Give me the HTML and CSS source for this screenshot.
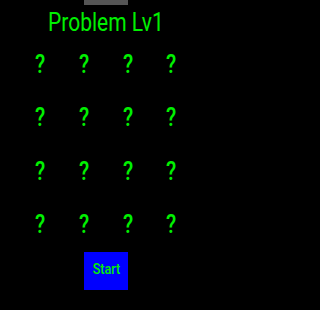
FILE: index.html
```html
<!DOCTYPE html>
<html>
<head>
<meta charset="utf-8">
<link rel="stylesheet" href="styles.css">
</head>
<body>
<div class="screen">
  <div class="handle"></div>
  <h1 class="title"><span class="squeeze">Problem Lv1</span></h1>
  <div class="grid">
    <div class="cell"><span class="squeeze">?</span></div>
    <div class="cell"><span class="squeeze">?</span></div>
    <div class="cell"><span class="squeeze">?</span></div>
    <div class="cell"><span class="squeeze">?</span></div>
    <div class="cell"><span class="squeeze">?</span></div>
    <div class="cell"><span class="squeeze">?</span></div>
    <div class="cell"><span class="squeeze">?</span></div>
    <div class="cell"><span class="squeeze">?</span></div>
    <div class="cell"><span class="squeeze">?</span></div>
    <div class="cell"><span class="squeeze">?</span></div>
    <div class="cell"><span class="squeeze">?</span></div>
    <div class="cell"><span class="squeeze">?</span></div>
    <div class="cell"><span class="squeeze">?</span></div>
    <div class="cell"><span class="squeeze">?</span></div>
    <div class="cell"><span class="squeeze">?</span></div>
    <div class="cell"><span class="squeeze">?</span></div>
  </div>
  <button class="start"><span class="squeeze">Start</span></button>
</div>
</body>
</html>
```
FILE: styles.css
```css
html, body {
  margin: 0;
  padding: 0;
  background: #000;
}
.screen {
  width: 207px;
  height: 310px;
  box-sizing: border-box;
  padding-left: 5px;
  display: flex;
  flex-direction: column;
  align-items: center;
  font-family: Roboto, "Liberation Sans", sans-serif;
  color: #00f000;
  overflow: hidden;
}
.handle {
  width: 44px;
  height: 5px;
  background: #555;
  flex: none;
}
.squeeze {
  display: inline-block;
  transform: scaleX(0.84);
}
.title {
  margin: 3px 0 0 0;
  font-size: 25px;
  font-weight: 400;
  line-height: 30px;
  white-space: nowrap;
}
.grid {
  display: grid;
  grid-template-columns: repeat(4, 43.67px);
  grid-auto-rows: 53.33px;
  font-size: 25px;
  font-weight: 500;
}
.cell {
  line-height: 53.33px;
  text-align: center;
}
.start {
  width: 44px;
  height: 38px;
  margin: 1px 0 0 0;
  padding: 0 0 4px 0;
  border: none;
  background: #0000ff;
  color: #00f000;
  font-family: Roboto, "Liberation Sans", sans-serif;
  font-size: 15px;
  font-weight: 500;
  line-height: 34px;
  text-align: center;
}
```
